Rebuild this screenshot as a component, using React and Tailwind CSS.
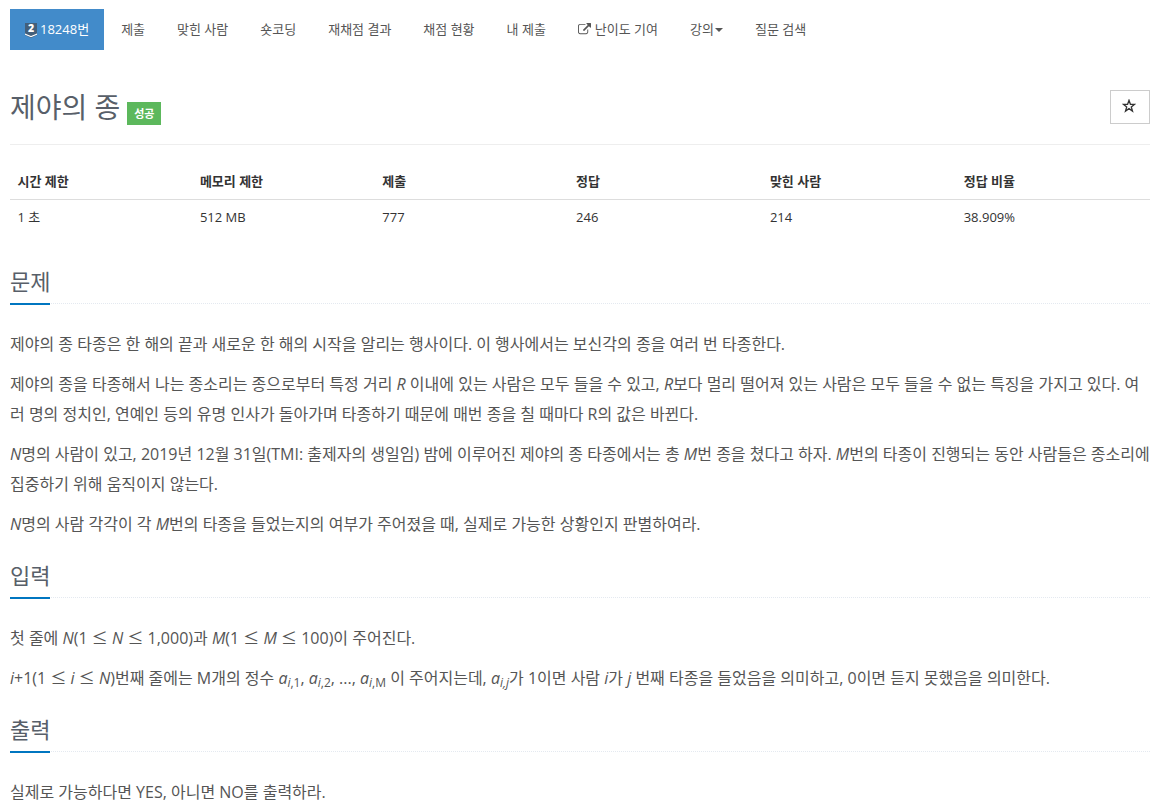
import clsx from 'clsx';

const columns = [
  { label: '시간 제한', value: '1 초', width: 'w-[16%]' },
  { label: '메모리 제한', value: '512 MB', width: 'w-[16%]' },
  { label: '제출', value: '777', width: 'w-[17%]' },
  { label: '정답', value: '246', width: 'w-[17%]' },
  { label: '맞힌 사람', value: '214', width: 'w-[17%]' },
  { label: '정답 비율', value: '38.909%', width: 'w-[17%]' },
];

function TierBadge() {
  return (
    <svg width="12" height="15" viewBox="0 0 12 15" className="mr-[3px] mt-[2px] shrink-0 overflow-visible">
      <path d="M0 0h12v12l-6 3L0 12z" fill="#435f7a" />
      <path d="M0 10.400l6 2.600 6-2.600v1.300l-6 2.600-6-2.600z" fill="#fff" />
      <text x="6" y="9" textAnchor="middle" fontSize="10.5" fontWeight="800" fill="#fff">2</text>
    </svg>
  );
}

function ExternalIcon() {
  return (
    <svg width="13" height="13" viewBox="0 0 1792 1792" fill="currentColor" className="mr-[4px] shrink-0">
      <path d="M1408 928v320q0 119-84.500 203.500T1120 1536H288q-119 0-203.500-84.500T0 1248V416q0-119 84.500-203.500T288 128h704q14 0 23 9t9 23v64q0 14-9 23t-23 9H288q-66 0-113 47t-47 113v832q0 66 47 113t113 47h832q66 0 113-47t47-113V928q0-14 9-23t23-9h64q14 0 23 9t9 23zm384-864v512q0 26-19 45t-45 19-45-19l-176-176-652 652q-10 10-23 10t-23-10L695 983q-10-10-10-23t10-23l652-652-176-176q-19-19-19-45t19-45 45-19h512q26 0 45 19t19 45z" />
    </svg>
  );
}

const Caret = () => (
  <span className="ml-[1px] mt-[1px] border-x-4 border-t-4 border-x-transparent border-t-[#555]" />
);

function NavItem({ active, children }) {
  return (
    <li>
      <a
        href="#"
        className={clsx(
          'flex h-[41px] items-center px-[15px] text-[13px]',
          active ? 'bg-[#428bca] text-white' : 'text-[#555]'
        )}
      >
        {children}
      </a>
    </li>
  );
}

function Section({ title, children }) {
  return (
    <section>
      <div className="mb-[25px] flex border-b border-dotted border-[#e4e9f0]">
        <h2 className="-mb-[2px] h-[40px] w-[40px] whitespace-nowrap border-b-2 border-[#0076c0] text-[22px] leading-[32px] text-[#585f69]">
          {title}
        </h2>
      </div>
      <div className="space-y-[10px] text-[16px] leading-[30px] text-[#555]">{children}</div>
    </section>
  );
}

// The Latin face's sign is too narrow, so take it from the Korean one
const Le = () => <span className="font-['Noto_Sans_CJK_KR',sans-serif] leading-none">≤</span>;

const Sub = ({ children }) => <sub className="text-[75%]">{children}</sub>;

export default function App() {
  return (
    <div className="h-[809px] w-[1166px] overflow-hidden bg-white pl-[10px] pr-[16px] pt-[9px] font-['Open_Sans','Noto_Sans_CJK_KR',sans-serif] text-[13px] text-[#333]">
      <ul className="flex gap-[2px]">
        <NavItem active><TierBadge />18248번</NavItem>
        <NavItem>제출</NavItem>
        <NavItem>맞힌 사람</NavItem>
        <NavItem>숏코딩</NavItem>
        <NavItem>재채점 결과</NavItem>
        <NavItem>채점 현황</NavItem>
        <NavItem>내 제출</NavItem>
        <NavItem><ExternalIcon />난이도 기여</NavItem>
        <NavItem>강의<Caret /></NavItem>
        <NavItem>질문 검색</NavItem>
      </ul>

      <header className="mt-[40px] flex h-[55px] items-start justify-between border-b border-[#eee]">
        <div className="flex">
          <h1 className="h-[36px] text-[28px] leading-[35px] text-[#585f69]">제야의 종</h1>
          <span className="ml-[7px] mt-[12px] h-[23px] w-[34px] bg-[#5cb85c] text-center text-[11px] font-bold leading-[23px] text-white">성공</span>
        </div>
        <button className="flex h-[34px] w-[40px] items-center justify-center border border-[#ccc] pb-[2px] pr-[2px] text-[#333]">
          <svg width="14" height="14" viewBox="0 0 14 14" fill="none" stroke="currentColor" strokeWidth="1.3">
            <path d="M7 1.300l1.400 4h4.300l-3.400 2.600 1.200 4.200L7 9.600l-3.500 2.500 1.200-4.200-3.400-2.600h4.300z" />
          </svg>
        </button>
      </header>

      <table className="mb-[29px] mt-[19px] w-full table-fixed text-left">
        <thead>
          <tr className="h-[35px] border-b border-[#ddd]">
            {columns.map((c) => (
              <th key={c.label} className={clsx('px-[7.5px] pt-px font-bold', c.width)}>{c.label}</th>
            ))}
          </tr>
        </thead>
        <tbody>
          <tr className="h-[37px]">
            {columns.map((c) => (
              <td key={c.label} className="px-[7.5px]">{c.value}</td>
            ))}
          </tr>
        </tbody>
      </table>

      <main className="space-y-[20px]">
        <Section title="문제">
          <p>제야의 종 타종은 한 해의 끝과 새로운 한 해의 시작을 알리는 행사이다. 이 행사에서는 보신각의 종을 여러 번 타종한다.</p>
          <p>제야의 종을 타종해서 나는 종소리는 종으로부터 특정 거리 <em>R</em> 이내에 있는 사람은 모두 들을 수 있고, <em>R</em>보다 멀리 떨어져 있는 사람은 모두 들을 수 없는 특징을 가지고 있다. 여러 명의 정치인, 연예인 등의 유명 인사가 돌아가며 타종하기 때문에 매번 종을 칠 때마다 R의 값은 바뀐다.</p>
          <p><em>N</em>명의 사람이 있고, 2019년 12월 31일(TMI: 출제자의 생일임) 밤에 이루어진 제야의 종 타종에서는 총 <em>M</em>번 종을 쳤다고 하자. <em>M</em>번의 타종이 진행되는 동안 사람들은 종소리에 집중하기 위해 움직이지 않는다.</p>
          <p><em>N</em>명의 사람 각각이 각 <em>M</em>번의 타종을 들었는지의 여부가 주어졌을 때, 실제로 가능한 상황인지 판별하여라.</p>
        </Section>
        <Section title="입력">
          <p>첫 줄에 <em>N</em>(1 <Le /> <em>N</em> <Le /> 1,000)과 <em>M</em>(1 <Le /> <em>M</em> <Le /> 100)이 주어진다.</p>
          <p>
            <em>i</em>+1(1 <Le /> <em>i</em> <Le /> <em>N</em>)번째 줄에는 M개의 정수 <em>a<Sub>i</Sub></em><Sub>,1</Sub>, <em>a<Sub>i</Sub></em><Sub>,2</Sub>, ..., <em>a<Sub>i</Sub></em><Sub>,M</Sub> 이 주어지는데, <em>a<Sub>i,j</Sub></em>가 1이면 사람 <em>i</em>가 <em>j</em> 번째 타종을 들었음을 의미하고, 0이면 듣지 못했음을 의미한다.
          </p>
        </Section>
        <Section title="출력">
          <p>실제로 가능하다면 YES, 아니면 NO를 출력하라.</p>
        </Section>
      </main>
    </div>
  );
}
